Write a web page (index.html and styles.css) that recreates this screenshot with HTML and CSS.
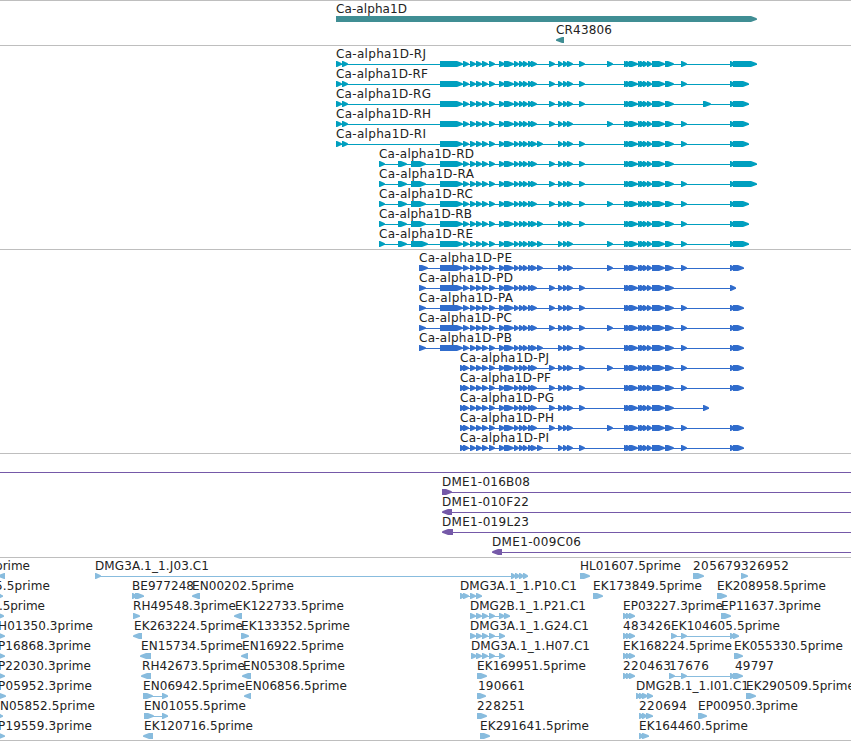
FILE: index.html
```
<!DOCTYPE html>
<html lang="en">
<head>
    <meta charset="UTF-8">
    <title>Ca-alpha1D</title>
    <link rel="stylesheet" href="styles.css">
</head>
<body>
    <div class="browser">
        <section class="track gene" id="gene"></section>
        <section class="track transcript" id="transcript"></section>
        <section class="track protein" id="protein"></section>
        <section class="track bac" id="bac"></section>
        <section class="track est" id="est"></section>
    </div>
    <script src="tracks.js"></script>
</body>
</html>
```
FILE: styles.css
```
body {
    margin: 0;
    background-color: #FFFFFF;
    overflow: hidden;
}
.browser {
    display: flex;
    flex-direction: column;
    width: 851px;
    border-bottom: 1px solid #BEBEBE;
}
.track {
    display: flex;
    flex-direction: column;
    border-top: 1px solid #BEBEBE;
    padding-bottom: 3px;
}
.row {
    display: block;
    width: 851px;
    height: 20px;
    overflow: visible;
}
.gene .row:first-child {
    height: 21px;
}
.est {
    padding-bottom: 2px;
}
.label {
    font-family: "DejaVu Sans", Verdana, sans-serif;
    font-size: 12px;
    fill: #222222;
}
.line {
    shape-rendering: crispEdges;
}
.gene .shape {
    fill: #408E94;
}
.transcript .shape {
    fill: #009FBF;
}
.protein .shape {
    fill: #306CCC;
}
.bac .shape {
    fill: #7559A8;
}
.est .shape {
    fill: #88BCDE;
}
```
FILE: tracks.js
```
var NS = 'http://www.w3.org/2000/svg';

function add(parent, tag, attrs) {
    var el = document.createElementNS(NS, tag);
    for (var key in attrs) {
        el.setAttribute(key, attrs[key]);
    }
    parent.appendChild(el);
    return el;
}

// part: [start, end], reversed when the feature is on the minus strand
function drawPart(svg, part) {
    var from = part[0], to = part[1];
    var dir = to > from ? 1 : -1;
    var tip = Math.min(Math.abs(to - from) - 1, 6);
    var neck = to - dir * tip;
    var shoulder = to - dir * tip * 0.45;
    add(svg, 'polygon', {
        'class': 'shape',
        points: [
            from + ',15', neck + ',15', shoulder + ',16.2', to + ',17.5',
            to + ',18.7', shoulder + ',19.8', neck + ',21', from + ',21'
        ].join(' ')
    });
}

// item: { label, x, end, parts, line }
function drawRow(trackId, items) {
    var svg = add(document.getElementById(trackId), 'svg', { 'class': 'row' });
    items.forEach(function(item) {
        var line = item.line;
        if (!line && item.parts.length > 1) {
            line = [item.parts[0][0], item.parts[item.parts.length - 1][1]];
        }
        if (line) {
            add(svg, 'rect', { 'class': 'shape line', x: line[0], y: 18, width: line[1] - line[0], height: 1 });
        }
        item.parts.forEach(function(part) {
            drawPart(svg, part);
        });
        if (item.label) {
            var text = add(svg, 'text', { 'class': 'label', x: item.x, y: 12, textLength: item.end - item.x });
            text.textContent = item.label;
        }
    });
}

function item(label, x, end, parts, line) {
    return { label: label, x: x, end: end, parts: parts, line: line };
}

// Genes
drawRow('gene', [item('Ca-alpha1D', 336, 407, [[336, 757]])]);
drawRow('gene', [item('CR43806', 556, 612, [[564, 556]])]);

// Exons shared by all isoforms
var shared = [
    [463, 469], [470, 476], [476, 482], [482, 488], [489, 495], [499, 505], [504, 514],
    [514, 519], [519, 524], [523, 528], [528, 533], [531, 537],
    [558, 563], [563, 568], [567, 573],
    [624, 629], [626, 632], [629, 638], [638, 642], [640, 645], [643, 648], [647, 652],
    [652, 665], [665, 674]
];
var optional = {
    a: [537, 543],
    b: [549, 555],
    c: [579, 585],
    d: [607, 613],
    e: [681, 687],
    f: [703, 711],
    g: [703, 709]
};

function isoform(track, name, x, end, first, flags, last) {
    var parts = first.concat(shared);
    flags.split('').forEach(function(flag) {
        parts.push(optional[flag]);
    });
    parts = parts.concat(last);
    drawRow(track, [item('Ca-alpha1D-' + name, x, end, parts)]);
}

var block = [440, 463];
var utr = [[336, 342], [342, 348], block];
var mid = [[379, 385], [398, 407], [411, 426], block];
var longEnd = [[730, 735], [733, 757]];
var shortEnd = [[730, 735], [733, 749]];

isoform('transcript', 'RJ', 336, 426, utr, 'bcde', longEnd);
isoform('transcript', 'RF', 336, 428, utr, 'bce', shortEnd);
isoform('transcript', 'RG', 336, 431, utr, 'bcf', shortEnd);
isoform('transcript', 'RH', 336, 431, utr, 'bde', shortEnd);
isoform('transcript', 'RI', 336, 426, utr, 'ace', shortEnd);
isoform('transcript', 'RD', 379, 474, mid, 'bc', longEnd);
isoform('transcript', 'RA', 379, 474, mid, 'bce', longEnd);
isoform('transcript', 'RC', 379, 473, mid, 'bcde', shortEnd);
isoform('transcript', 'RB', 379, 472, mid, 'ace', shortEnd);
isoform('transcript', 'RE', 379, 473, [[379, 385], [398, 407], [411, 428], block], 'ade', shortEnd);

var start = [[419, 426], block];
var lateStart = [[460, 465], [463, 468]];
var stop = [[730, 735], [733, 744]];

isoform('protein', 'PE', 419, 512, [[419, 428], block], 'ade', stop);
isoform('protein', 'PD', 419, 513, start, 'bc', [[730, 736]]);
isoform('protein', 'PA', 419, 513, start, 'bce', stop);
isoform('protein', 'PC', 419, 512, start, 'bcde', stop);
isoform('protein', 'PB', 419, 512, start, 'ace', stop);
isoform('protein', 'PJ', 460, 549, lateStart, 'bcde', stop);
isoform('protein', 'PF', 460, 551, lateStart, 'bce', stop);
isoform('protein', 'PG', 460, 554, lateStart, 'bcg', []);
isoform('protein', 'PH', 460, 554, lateStart, 'bde', stop);
isoform('protein', 'PI', 460, 549, lateStart, 'ace', stop);

// BACs
drawRow('bac', [item('', 0, 0, [], [0, 851])]);
drawRow('bac', [item('DME1-016B08', 442, 530, [[442, 452]], [442, 851])]);
drawRow('bac', [item('DME1-010F22', 442, 529, [[452, 442]], [446, 851])]);
drawRow('bac', [item('DME1-019L23', 442, 529, [[453, 442]], [446, 851])]);
drawRow('bac', [item('DME1-009C06', 492, 581, [[502, 492]], [496, 851])]);

// ESTs
drawRow('est', [
    item('prime', -5, 30, [[5, -2]]),
    item('DMG3A.1_1.J03.C1', 95, 209, [[95, 101], [511, 516], [515, 520], [519, 524], [523, 528]]),
    item('HL01607.5prime', 580, 681, [[580, 590]]),
    item('205679', 693, 741, [[693, 704]]),
    item('326952', 741, 789, [[741, 748]])
]);
drawRow('est', [
    item('5.5prime', -5, 50, [[-3, 3]]),
    item('BE977248', 132, 194, [[132, 137], [135, 144]]),
    item('EN00202.5prime', 192, 294, [[200, 192]]),
    item('DMG3A.1_1.P10.C1', 460, 577, [[460, 465], [463, 469], [470, 476], [476, 482]]),
    item('EK173849.5prime', 593, 702, [[593, 603]]),
    item('EK208958.5prime', 717, 826, [[717, 727]])
]);
drawRow('est', [
    item('.5prime', -1, 45, [[-2, 4]]),
    item('RH49548.3prime', 133, 236, [[133, 140]]),
    item('EK122733.5prime', 235, 344, [[242, 234]]),
    item('DMG2B.1_1.P21.C1', 470, 586, [[470, 476], [476, 482], [482, 488], [489, 495], [499, 505], [504, 510]]),
    item('EP03227.3prime', 623, 723, [[623, 628], [626, 631], [629, 635]]),
    item('EP11637.3prime', 721, 821, [[721, 731]])
]);
drawRow('est', [
    item('H01350.3prime', -2, 93, [[-2, 5]]),
    item('EK263224.5prime', 134, 243, [[142, 133]]),
    item('EK133352.5prime', 241, 350, [[241, 249]]),
    item('DMG3A.1_1.G24.C1', 470, 589, [[470, 476], [476, 482], [482, 488], [489, 495], [499, 505]]),
    item('483426', 623, 671, [[623, 628], [626, 631], [629, 635]]),
    item('EK104605.5prime', 671, 780, [[671, 677], [681, 687], [730, 735], [733, 739]])
]);
drawRow('est', [
    item('P16868.3prime', -2, 91, [[-2, 5]]),
    item('EN15734.5prime', 141, 243, [[151, 140]]),
    item('EN16922.5prime', 242, 344, [[248, 241]]),
    item('DMG3A.1_1.H07.C1', 471, 590, [[471, 477], [476, 482], [482, 488], [489, 495], [499, 505]]),
    item('EK168224.5prime', 623, 732, [[623, 628], [626, 631], [629, 635]]),
    item('EK055330.5prime', 734, 843, [[734, 743]])
]);
drawRow('est', [
    item('P22030.3prime', -2, 91, [[-2, 5]]),
    item('RH42673.5prime', 142, 245, [[151, 141]]),
    item('EN05308.5prime', 243, 345, [[251, 242]]),
    item('EK169951.5prime', 477, 586, [[477, 487]]),
    item('220463', 623, 671, [[623, 628], [626, 631], [629, 635]]),
    item('17676', 669, 709, [[669, 675], [681, 687], [730, 735], [733, 739]]),
    item('49797', 735, 774, [[734, 743]])
]);
drawRow('est', [
    item('P05952.3prime', -2, 92, [[-2, 6]]),
    item('EN06942.5prime', 143, 245, [[143, 153], [162, 168]]),
    item('EN06856.5prime', 245, 347, [[251, 244]]),
    item('190661', 478, 525, [[477, 486]]),
    item('DMG2B.1_1.I01.C1', 636, 749, [[636, 641], [639, 644], [642, 648], [647, 653]]),
    item('EK290509.5prime', 746, 855, [[746, 756]])
]);
drawRow('est', [
    item('N05852.5prime', 0, 95, [[-3, 3]]),
    item('EN01055.5prime', 144, 246, [[144, 154], [162, 168]]),
    item('228251', 477, 525, [[477, 487]]),
    item('220694', 639, 687, [[639, 644], [642, 647], [646, 653]]),
    item('EP00950.3prime', 698, 798, [[698, 707]])
]);
drawRow('est', [
    item('P19559.3prime', -2, 92, [[-2, 5]]),
    item('EK120716.5prime', 144, 253, [[153, 143]]),
    item('EK291641.5prime', 480, 589, [[480, 490]]),
    item('EK164460.5prime', 639, 748, [[639, 644], [642, 649]])
]);
```
